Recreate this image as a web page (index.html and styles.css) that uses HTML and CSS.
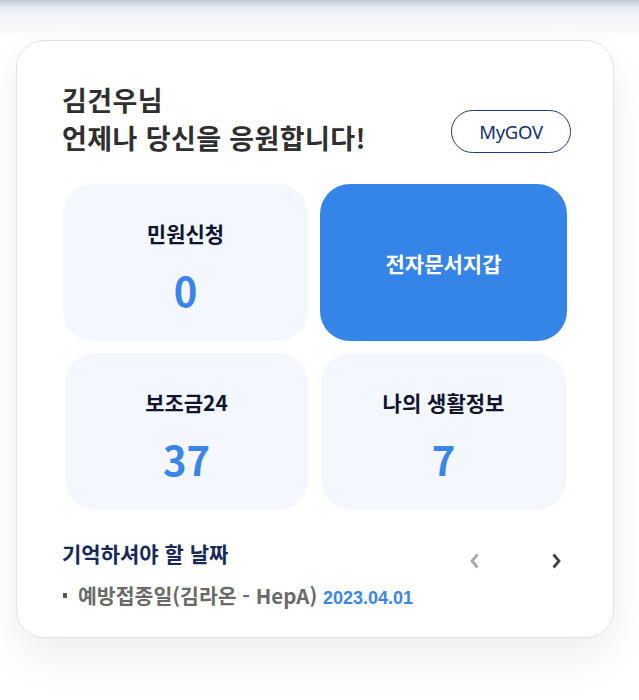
FILE: index.html
```html
<!DOCTYPE html>
<html lang="ko">
<head>
<meta charset="utf-8">
<title>MyGOV</title>
<link rel="stylesheet" href="styles.css">
</head>
<body>
<div class="topfade"></div>
<section class="card">
  <div class="head">
    <h2 class="greet">김건우님<br>언제나 당신을 응원합니다!</h2>
    <a class="mygov" href="#">MyGOV</a>
  </div>
  <div class="tiles">
    <div class="tile">
      <span class="label">민원신청</span>
      <span class="num">0</span>
    </div>
    <div class="tile tile-blue">
      <span class="label">전자문서지갑</span>
    </div>
    <div class="tile tile-r2a">
      <span class="label">보조금24</span>
      <span class="num">37</span>
    </div>
    <div class="tile tile-r2b">
      <span class="label">나의 생활정보</span>
      <span class="num">7</span>
    </div>
  </div>
  <div class="dates-head">
    <h3 class="dates-title">기억하셔야 할 날짜</h3>
    <div class="arrows">
      <button class="arrow arrow-prev" aria-label="이전">
        <svg width="11" height="16" viewBox="0 0 11 16"><path d="M8.5 1.5 L3 8 L8.5 14.5" fill="none" stroke="#a9a9a9" stroke-width="2.8"/></svg>
      </button>
      <button class="arrow arrow-next" aria-label="다음">
        <svg width="11" height="16" viewBox="0 0 11 16"><path d="M2.5 1.5 L8 8 L2.5 14.5" fill="none" stroke="#444" stroke-width="2.8"/></svg>
      </button>
    </div>
  </div>
  <ul class="dates">
    <li><span class="what">예방접종일(김라온 - HepA)</span> <span class="when">2023.04.01</span></li>
  </ul>
</section>
</body>
</html>
```

FILE: styles.css
```css
* { box-sizing: border-box; }
html, body { margin: 0; padding: 0; }
body {
  width: 639px;
  height: 700px;
  background: #ffffff;
  font-family: "Noto Sans CJK KR", "Noto Sans", sans-serif;
  position: relative;
  overflow: hidden;
  padding-top: 40px;
  padding-left: 16px;
}
.topfade {
  position: absolute;
  left: 0; top: 0; right: 0;
  height: 40px;
  background: linear-gradient(to bottom, #c2cad8 0, #e3e7ee 7px, #f4f5f8 16px, #fafafa 30px, rgba(250,250,250,0) 40px);
}
.card {
  position: relative;
  width: 598px;
  height: 598px;
  background: #fff;
  border: 1px solid #e2e2ea;
  border-radius: 28px;
  box-shadow: 0 22px 45px rgba(0,0,0,0.06), 0 0 30px rgba(0,0,0,0.02);
  padding: 40px 46px 0 45px;
}
.head {
  display: flex;
  justify-content: space-between;
  align-items: flex-end;
}
.greet {
  margin: 0;
  font-size: 27px;
  line-height: 38px;
  font-weight: 700;
  color: #2f2f2f;
  letter-spacing: 0.4px;
}
.mygov {
  display: flex;
  align-items: center;
  justify-content: center;
  width: 120px;
  height: 43px;
  margin-bottom: 4px;
  margin-right: -4px;
  border: 1.3px solid #223b73;
  border-radius: 22px;
  color: #14306a;
  font-family: "Noto Sans", sans-serif;
  font-size: 18.5px;
  text-decoration: none;
  letter-spacing: -0.3px;
}
.tiles {
  margin-top: 27px;
  display: grid;
  grid-template-columns: 245px 247px;
  column-gap: 12px;
  row-gap: 12px;
  margin-left: 1px;
}
.tile {
  height: 157px;
  background: #f4f7fe;
  border-radius: 30px;
  display: flex;
  flex-direction: column;
  align-items: center;
  padding-top: 35px;
}
.tile-r2a { margin-left: 2px; }
.tile-r2b { margin-left: 1px; margin-right: 1px; }
.label {
  font-size: 21px;
  line-height: 28px;
  font-weight: 700;
  color: #0f1430;
}
.num {
  margin-top: 20px;
  font-size: 40px;
  line-height: 46px;
  font-weight: 700;
  color: #3a86e8;
}
.tile-blue {
  background: #3584e8;
  justify-content: center;
  padding-top: 0;
}
.tile-blue .label { color: #fff; }
.dates-head {
  margin-top: 29px;
  display: flex;
  justify-content: space-between;
  align-items: flex-start;
}
.dates-title {
  margin: 0;
  font-size: 21px;
  line-height: 28px;
  font-weight: 700;
  color: #17295a;
}
.arrows {
  display: flex;
  gap: 58px;
  padding-top: 13px;
  margin-right: -1px;
}
.arrow {
  width: 24px;
  height: 18px;
  padding: 0;
  border: 0;
  background: none;
  display: flex;
  align-items: center;
  justify-content: center;
}
.dates {
  list-style: none;
  margin: 11px 0 0;
  padding: 0;
}
.dates li {
  position: relative;
  padding-left: 16px;
  font-size: 20.5px;
  line-height: 28px;
  font-weight: 700;
}
.dates li::before {
  content: "";
  position: absolute;
  left: 1px;
  top: 12px;
  width: 4px;
  height: 5px;
  background: #555;
}
.what { color: #6a6a6a; }
.when {
  color: #3a86e8;
  font-family: "Liberation Sans", sans-serif;
  font-size: 18px;
}
```
